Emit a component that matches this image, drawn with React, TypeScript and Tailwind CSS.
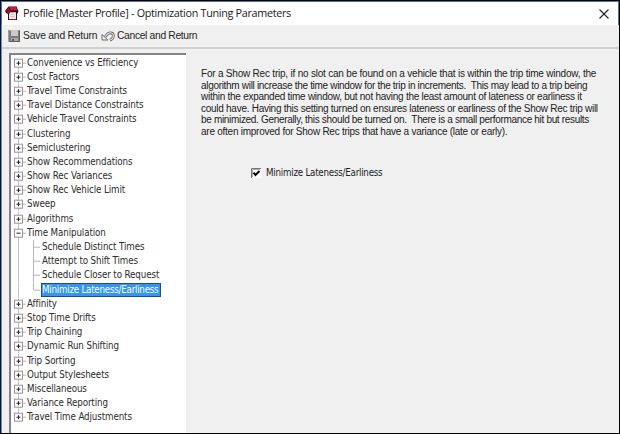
type Item = { label: string; open?: boolean; children?: string[] };

const items: Item[] = [
  { label: "Convenience vs Efficiency" },
  { label: "Cost Factors" },
  { label: "Travel Time Constraints" },
  { label: "Travel Distance Constraints" },
  { label: "Vehicle Travel Constraints" },
  { label: "Clustering" },
  { label: "Semiclustering" },
  { label: "Show Recommendations" },
  { label: "Show Rec Variances" },
  { label: "Show Rec Vehicle Limit" },
  { label: "Sweep" },
  { label: "Algorithms" },
  {
    label: "Time Manipulation",
    open: true,
    children: [
      "Schedule Distinct Times",
      "Attempt to Shift Times",
      "Schedule Closer to Request",
      "Minimize Lateness/Earliness",
    ],
  },
  { label: "Affinity" },
  { label: "Stop Time Drifts" },
  { label: "Trip Chaining" },
  { label: "Dynamic Run Shifting" },
  { label: "Trip Sorting" },
  { label: "Output Stylesheets" },
  { label: "Miscellaneous" },
  { label: "Variance Reporting" },
  { label: "Travel Time Adjustments" },
];

const selected = "Minimize Lateness/Earliness";

function AppIcon() {
  return (
    <svg width="14" height="15" viewBox="0 0 14 15" className="block shrink-0">
      <path d="M0 5 3.5.5H11.5L13.5 5.5 12 8V14H3V8L1 7Z" fill="#2a1017" />
      <path d="M3.8 1H11L12.5 4.5H6Z" fill="#d5123c" />
      <path d="M3.5 1.5 5.5 5 3.5 7.5 1 5.5Z" fill="#a80d2c" />
      <path d="M5 6.2H11V13H4V8Z" fill="#efe6e8" />
      <path d="M4 13.5H11" stroke="#8d2035" />
      <path d="M6 8.5H9M6 10.5H9" stroke="#d3c4c8" />
    </svg>
  );
}

function SaveIcon() {
  return (
    <svg width="12" height="12" viewBox="0 0 12 12" className="block shrink-0">
      <path d="M0 0H12V12H1L0 11Z" fill="#7c7c7c" />
      <path d="M.5 11V.5H11" fill="none" stroke="#a0a0a0" />
      <path d="M3 0H10V6H3Z" fill="#c9c9c9" />
      <path d="M3 8H10V12H3Z" fill="#a9a9a9" />
      <path d="M4 9H6V12H4Z" fill="#5c5c5c" />
      <path d="M11.5 1V11.5H1" fill="none" stroke="#5f5f5f" />
    </svg>
  );
}

function UndoIcon() {
  return (
    <svg width="14" height="11" viewBox="0 0 14 11" className="block shrink-0">
      <path d="M4 6 6 3.6C8 1 12 1.2 12.4 4.4 12.6 6.8 11 8.2 9 9.2" fill="none" stroke="#5c5c5c" strokeWidth="2.7" />
      <path d="M4 6 6 3.6C8 1 12 1.2 12.4 4.4 12.6 6.8 11 8.2 9.4 9" fill="none" stroke="#f0f0f0" strokeWidth="1.1" />
      <path d="M1 3.5V9H6.8Z" fill="#f0f0f0" stroke="#5c5c5c" strokeWidth=".9" />
    </svg>
  );
}

function Expander({ open, first, last }: { open?: boolean; first: boolean; last: boolean }) {
  return (
    <svg width="13" height="14.2" viewBox="0 0 13 14.2" className="block shrink-0">
      {!first && <path d="M4.5 0V3" stroke="#c4c4c4" />}
      {!last && <path d="M4.5 11V14.2" stroke="#c4c4c4" />}
      <path d="M9 7.2H12" stroke="#b5b5b5" />
      <rect x=".5" y="3.2" width="8" height="8" fill="#fff" stroke="#969696" />
      <path d="M2.5 7.2H6.5" stroke="#222" />
      {!open && <path d="M4.5 5.2V9.2" stroke="#222" />}
    </svg>
  );
}

function ChildLines({ last }: { last: boolean }) {
  return (
    <svg width="27" height="14.2" viewBox="0 0 27 14.2" className="block shrink-0">
      <path d="M4.5 0V14.2" stroke="#c4c4c4" />
      <path d={last ? "M19.5 0V7.2" : "M19.5 0V14.2"} stroke="#b5b5b5" />
      <path d="M20 7.2H26" stroke="#b5b5b5" />
    </svg>
  );
}

function Tree() {
  return (
    <ul className="pl-[3px] pt-[0.6px] font-['DejaVu_Sans_Condensed','DejaVu_Sans',sans-serif] text-[9.7px] leading-[14.2px] tracking-[-0.1px] text-[#2c2c2c]">
      {items.map((item, i) => (
        <li key={item.label}>
          <div className="flex h-[14.2px] items-center whitespace-nowrap">
            <Expander open={item.open} first={i === 0} last={i === items.length - 1} />
            <span>{item.label}</span>
          </div>
          {item.children?.map((child, j) => (
            <div key={child} className="flex h-[14.2px] items-center whitespace-nowrap">
              <ChildLines last={j === item.children!.length - 1} />
              {child === selected ? (
                <span className="flex h-[14px] w-[120px] items-center border border-[#2c4a70] bg-[#3296f2] tracking-[-0.23px] text-white">
                  {child}
                </span>
              ) : (
                <span className="pl-px">{child}</span>
              )}
            </div>
          ))}
        </li>
      ))}
    </ul>
  );
}

const paragraph = [
  {
    text: "For a Show Rec trip, if no slot can be found on a vehicle that is within the trip time window, the",
    tracking: "tracking-[-0.21px]",
  },
  {
    text: "algorithm will increase the time window for the trip in increments.  This may lead to a trip being",
    tracking: "tracking-[-0.31px]",
  },
  {
    text: "within the expanded time window, but not having the least amount of lateness or earliness it",
    tracking: "tracking-[-0.26px]",
  },
  {
    text: "could have. Having this setting turned on ensures lateness or earliness of the Show Rec trip will",
    tracking: "tracking-[-0.27px]",
  },
  {
    text: "be minimized. Generally, this should be turned on.  There is a small performance hit but results",
    tracking: "tracking-[-0.32px]",
  },
  {
    text: "are often improved for Show Rec trips that have a variance (late or early).",
    tracking: "tracking-[-0.25px]",
  },
];

export default function App() {
  return (
    <div className="flex h-[434px] w-[620px] flex-col overflow-hidden border border-black border-l-[#07103a] bg-[#f0f0f0]">
      <header className="flex h-[24px] shrink-0 items-center border-x border-t border-[#53769c] bg-white pl-[3px] pr-[9px]">
        <AppIcon />
        <h1 className="ml-[4px] grow whitespace-pre font-['Open_Sans','Noto_Sans',sans-serif] text-[10.8px] tracking-[-0.31px] text-[#202020]">
          Profile [Master Profile] - Optimization Tuning Parameters
        </h1>
        <svg width="10" height="10" viewBox="0 0 10 10" className="block">
          <path d="M.5.5 9.5 9.5M9.5.5.5 9.5" stroke="#222" strokeWidth="1.1" />
        </svg>
      </header>
      <div className="flex min-h-0 grow flex-col border-l border-[#7590b0]">
        <div className="flex h-[24px] shrink-0 items-center border-b-2 border-[#d0d0d0] pl-[6px] font-['Liberation_Sans',sans-serif] text-[10.3px] tracking-[-0.2px] text-[#252525]">
          <SaveIcon />
          <span className="ml-[3px] w-[76px] shrink-0 whitespace-nowrap">Save and Return</span>
          <span className="ml-[2px]"><UndoIcon /></span>
          <span className="ml-[2px] whitespace-nowrap tracking-[-0.33px]">Cancel and Return</span>
        </div>
        <main className="flex min-h-0 grow">
          <nav className="ml-[7px] mt-[4px] w-[177px] shrink-0 overflow-hidden border-l-2 border-t-2 border-[#858585] bg-white">
            <Tree />
          </nav>
          <section className="pl-[15px] pt-[19px] text-[#222]">
            <div className="font-['Liberation_Sans',sans-serif] text-[10px] leading-[11.6px]">
              {paragraph.map(({ text, tracking }) => (
                <p key={text} className={`whitespace-pre ${tracking}`}>{text}</p>
              ))}
            </div>
            <label className="ml-[50px] mt-[30px] flex h-[12px] items-center">
              <svg width="11" height="11" viewBox="0 0 11 11" className="block">
                <path d="M0 0H10V10H0Z" fill="#fff" />
                <path d="M.5 10V.5H10" fill="none" stroke="#777" />
                <path d="M1.5 9V1.5H9" fill="none" stroke="#aaa" />
                <path d="M2.5 4.7 4.5 7 8.5 3" fill="none" stroke="#000" strokeWidth="2" />
              </svg>
              <span className="ml-[4px] whitespace-nowrap font-['DejaVu_Sans_Condensed','DejaVu_Sans',sans-serif] text-[9.7px] tracking-[-0.23px]">
                Minimize Lateness/Earliness
              </span>
            </label>
          </section>
        </main>
      </div>
    </div>
  );
}
